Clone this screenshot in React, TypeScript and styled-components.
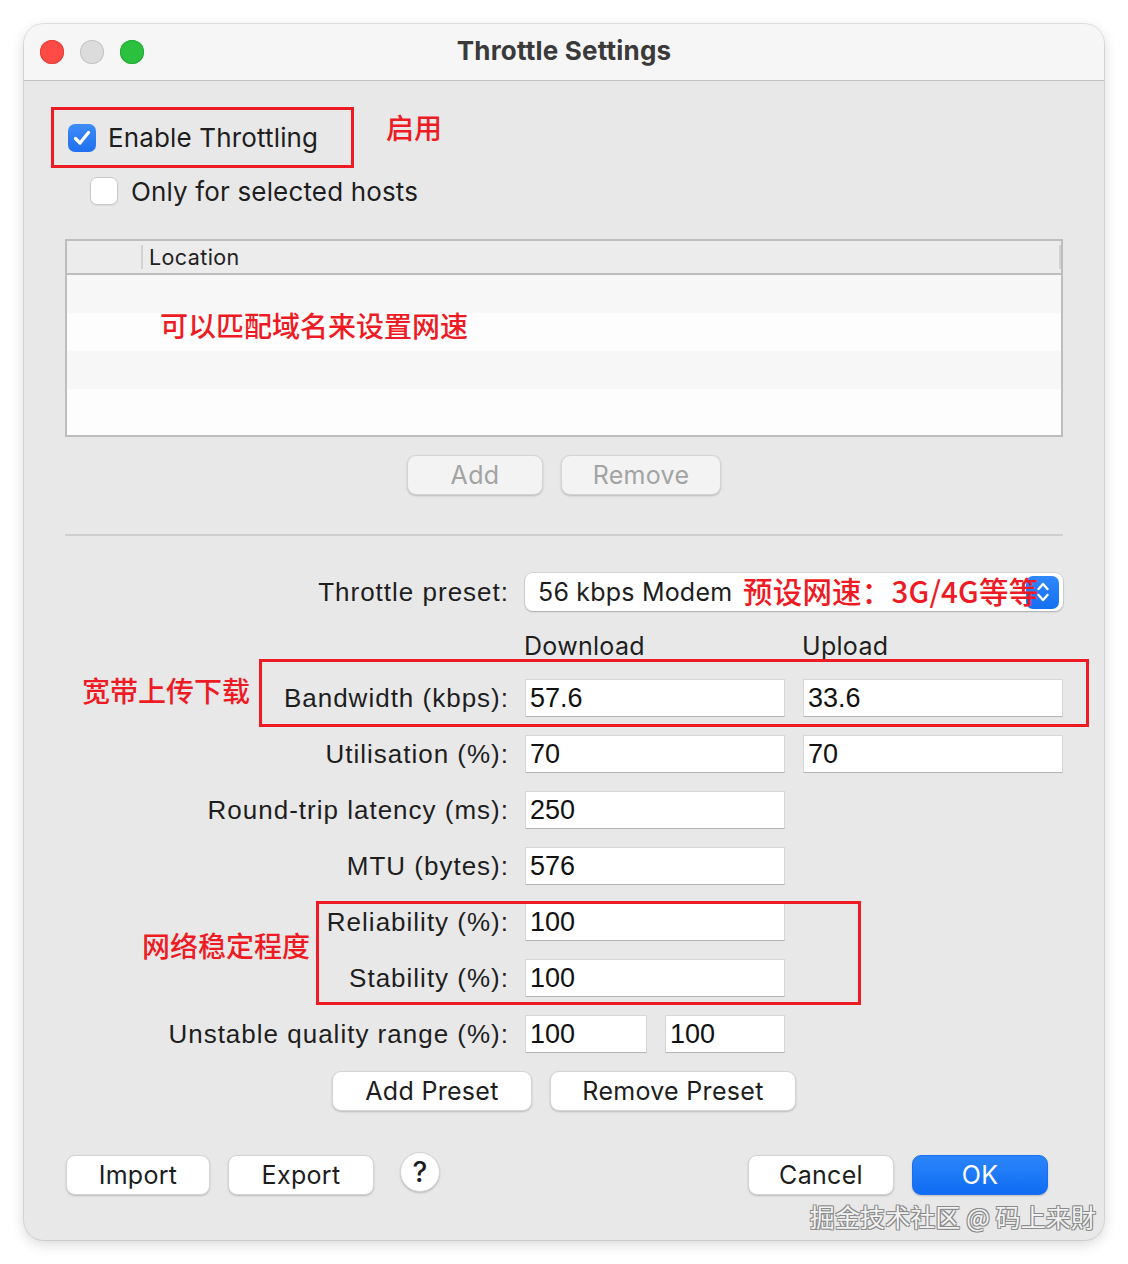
import styled, { createGlobalStyle } from 'styled-components';

const GlobalStyle = createGlobalStyle`
  body {
    margin: 0;
    background: #ffffff;
    font-family: Inter, "Noto Sans", sans-serif;
    color: #1d1d1d;
  }
`;

const RED = '#ee1b24';

const Page = styled.div`
  padding: 24px;
`;

const Window = styled.div`
  position: relative;
  display: flex;
  flex-direction: column;
  width: 1080px;
  height: 1216px;
  background: #e8e8e8;
  border-radius: 20px;
  overflow: hidden;
  box-shadow: 0 0 0 1px rgba(0, 0, 0, 0.1), 0 4px 14px rgba(0, 0, 0, 0.16);
`;

const TitleBar = styled.div`
  display: grid;
  grid-template-columns: 1fr auto 1fr;
  align-items: center;
  height: 56px;
  padding: 0 16px;
  background: #f6f6f6;
  border-bottom: 1px solid #c2c2c2;
`;

const Lights = styled.div`
  display: flex;
  gap: 16px;
`;

const Light = styled.span<{ color: string; edge: string }>`
  width: 24px;
  height: 24px;
  border-radius: 50%;
  background: ${({ color }) => color};
  box-shadow: inset 0 0 0 1px ${({ edge }) => edge};
`;

const Title = styled.div`
  margin-top: -4px;
  font-size: 26px;
  font-weight: 700;
  letter-spacing: 0.2px;
  color: #3a3a3a;
`;

const Body = styled.div`
  display: flex;
  flex-direction: column;
  padding: 0 41px;
`;

const Red = styled.span<{ size?: number }>`
  font-family: "Noto Sans CJK SC", sans-serif;
  font-size: ${({ size }) => size ?? 28}px;
  font-weight: 500;
  line-height: 1;
  color: ${RED};
`;

const EnableRow = styled.div`
  display: flex;
  align-items: flex-start;
  gap: 32px;
  margin: 26px 0 0 -14px;
`;

const RedFrame = styled.div`
  display: flex;
  align-items: center;
  gap: 12px;
  width: 303px;
  height: 61px;
  box-sizing: border-box;
  padding-left: 14px;
  border: 3px solid ${RED};
`;

const EnableNote = styled(Red)`
  margin-top: 6px;
`;

const CheckRow = styled.div`
  display: flex;
  align-items: center;
  gap: 13px;
  margin: 9px 0 0 25px;
  height: 28px;
`;

const Box = styled.span<{ checked?: boolean }>`
  display: flex;
  align-items: center;
  justify-content: center;
  width: 28px;
  height: 28px;
  box-sizing: border-box;
  border-radius: 7px;
  background: ${({ checked }) => (checked ? 'linear-gradient(#3f8cf8, #1f6ff0)' : '#ffffff')};
  border: ${({ checked }) => (checked ? 'none' : '1px solid #c9c9c9')};
  box-shadow: ${({ checked }) => (checked ? 'none' : '0 1px 1px rgba(0,0,0,0.06)')};
`;

const CheckText = styled.span`
  font-size: 26px;
  letter-spacing: 0.15px;
  color: #1e1e1e;
`;

const Table = styled.div`
  position: relative;
  margin-top: 34px;
  height: 198px;
  box-sizing: border-box;
  border: 2px solid #bdbdbd;
  background: #fdfdfd;
  display: flex;
  flex-direction: column;
`;

const TableHead = styled.div`
  display: flex;
  align-items: center;
  height: 32px;
  background: #ececec;
  border-bottom: 2px solid #bcbcbc;
`;

const HeadCell = styled.div<{ width?: number }>`
  flex: ${({ width }) => (width ? `0 0 ${width}px` : '1')};
  height: 24px;
  display: flex;
  align-items: center;
  padding-left: 6px;
  border-right: 2px solid #d2d2d2;
  font-size: 21.5px;
  letter-spacing: 0.4px;
  color: #222;
`;

const TableRow = styled.div<{ odd: boolean }>`
  height: 38px;
  background: ${({ odd }) => (odd ? '#f7f7f7' : '#fdfdfd')};
`;

const TableNote = styled(Red)`
  position: absolute;
  left: 93px;
  top: 70px;
`;

const ButtonRow = styled.div<{ mt: number }>`
  display: flex;
  justify-content: center;
  gap: 18px;
  margin-top: ${({ mt }) => mt}px;
`;

const Button = styled.button<{ w: number; primary?: boolean; disabled?: boolean }>`
  width: ${({ w }) => w}px;
  height: 40px;
  border-radius: 9px;
  border: 1px solid ${({ primary }) => (primary ? '#1a6ff0' : '#d4d4d4')};
  background: ${({ primary, disabled }) =>
    primary ? 'linear-gradient(#2b86fb, #0f6cf3)' : disabled ? '#f3f3f3' : '#ffffff'};
  color: ${({ primary, disabled }) => (primary ? '#ffffff' : disabled ? '#a3a3a3' : '#1d1d1d')};
  box-shadow: 0 1px 2px rgba(0, 0, 0, 0.2);
  font-family: Inter, sans-serif;
  font-size: 25px;
  letter-spacing: 0.3px;
  padding: 0;
`;

const Separator = styled.div`
  margin-top: 39px;
  height: 2px;
  background: #cfcfcf;
`;

const Form = styled.div`
  position: relative;
  display: grid;
  grid-template-columns: 1fr 260px 260px;
  column-gap: 18px;
  row-gap: 18px;
  margin-top: 37px;
`;

const Label = styled.div`
  display: flex;
  align-items: center;
  justify-content: flex-end;
  height: 38px;
  margin-right: -2px;
  font-family: "Liberation Sans", Arial, sans-serif;
  font-size: 26px;
  letter-spacing: 1px;
  color: #1e1e1e;
`;

const Select = styled.div`
  position: relative;
  grid-column: 2 / 4;
  display: flex;
  align-items: center;
  justify-content: space-between;
  height: 38px;
  padding: 0 4px 0 13px;
  background: #ffffff;
  border-radius: 8px;
  box-shadow: 0 0 0 1px rgba(0, 0, 0, 0.08), 0 1px 2px rgba(0, 0, 0, 0.2);
  font-size: 25px;
  letter-spacing: 0.2px;
`;

const Stepper = styled.span`
  display: flex;
  align-items: center;
  justify-content: center;
  width: 33px;
  height: 33px;
  border-radius: 7px;
  background: linear-gradient(#2f88fb, #146ff3);
`;

const SelectNote = styled(Red)`
  position: absolute;
  left: 218px;
  top: 3px;
  z-index: 1;
`;

const ColHead = styled.div<{ first?: boolean }>`
  grid-column: ${({ first }) => (first ? 2 : 3)};
  height: 26px;
  margin: 4px 0 2px -1px;
  font-size: 25px;
  letter-spacing: 0.3px;
  line-height: 26px;
  color: #1e1e1e;
`;

const Field = styled.div`
  display: flex;
  align-items: center;
  height: 38px;
  box-sizing: border-box;
  padding-left: 4px;
  background: #ffffff;
  border: 1px solid #d6d6d6;
  border-bottom-color: #b4b4b4;
  font-family: "Liberation Sans", Arial, sans-serif;
  font-size: 27px;
  color: #111;
`;

const PairField = styled.div`
  display: grid;
  grid-template-columns: 122px 120px;
  gap: 18px;
`;

const Overlay = styled.div<{ x: number; y: number; w: number; h: number }>`
  position: absolute;
  left: ${({ x }) => x}px;
  top: ${({ y }) => y}px;
  width: ${({ w }) => w}px;
  height: ${({ h }) => h}px;
  box-sizing: border-box;
  border: 3px solid ${RED};
  pointer-events: none;
`;

const FormNote = styled(Red)<{ x: number; y: number }>`
  position: absolute;
  left: ${({ x }) => x}px;
  top: ${({ y }) => y}px;
`;

const Footer = styled.div`
  display: flex;
  align-items: center;
  justify-content: space-between;
  margin: 44px 15px 0 1px;
`;

const Group = styled.div`
  display: flex;
  align-items: center;
  gap: 18px;
`;

const Help = styled.button`
  width: 40px;
  height: 40px;
  margin: -6px 0 0 8px;
  border-radius: 50%;
  border: 1px solid #d4d4d4;
  background: #ffffff;
  box-shadow: 0 1px 2px rgba(0, 0, 0, 0.2);
  font-family: Inter, sans-serif;
  font-size: 28px;
  font-weight: 500;
  color: #1d1d1d;
  padding: 0;
`;

const Watermark = styled.div`
  position: absolute;
  right: 8px;
  bottom: 6px;
  font-family: "Noto Sans CJK SC", sans-serif;
  font-size: 25px;
  letter-spacing: 0.1px;
  color: #f2f2f2;
  text-shadow: -1px -1px 0 #8a8a8a, 1px -1px 0 #8a8a8a, -1px 1px 0 #8a8a8a, 1px 1px 0 #8a8a8a;
`;

const rows: { label: string; down: string; up?: string }[] = [
  { label: 'Bandwidth (kbps):', down: '57.6', up: '33.6' },
  { label: 'Utilisation (%):', down: '70', up: '70' },
  { label: 'Round-trip latency (ms):', down: '250' },
  { label: 'MTU (bytes):', down: '576' },
  { label: 'Reliability (%):', down: '100' },
  { label: 'Stability (%):', down: '100' },
];

function Tick() {
  return (
    <svg width="18" height="16" viewBox="0 0 18 16">
      <path d="M2.5 8.5 L7 13 L15.5 2.5" fill="none" stroke="#fff" strokeWidth="3.2" strokeLinecap="round" strokeLinejoin="round" />
    </svg>
  );
}

function UpDown() {
  return (
    <svg width="14" height="24" viewBox="0 0 14 24">
      <path d="M2.5 9 L7 4 L11.5 9 M2.5 15 L7 20 L11.5 15" fill="none" stroke="#fff" strokeWidth="2.4" strokeLinecap="round" strokeLinejoin="round" />
    </svg>
  );
}

export default function App() {
  return (
    <Page>
      <GlobalStyle />
      <Window>
        <TitleBar>
          <Lights>
            <Light color="#fe4b45" edge="#e2403a" />
            <Light color="#dcdcdc" edge="#c4c4c4" />
            <Light color="#2bc03e" edge="#25a935" />
          </Lights>
          <Title>Throttle Settings</Title>
          <span />
        </TitleBar>

        <Body>
          <EnableRow>
            <RedFrame>
              <Box checked><Tick /></Box>
              <CheckText>Enable Throttling</CheckText>
            </RedFrame>
            <EnableNote>启用</EnableNote>
          </EnableRow>
          <CheckRow>
            <Box />
            <CheckText>Only for selected hosts</CheckText>
          </CheckRow>

          <Table>
            <TableHead>
              <HeadCell width={68} />
              <HeadCell>Location</HeadCell>
            </TableHead>
            {[0, 1, 2, 3].map(i => (
              <TableRow key={i} odd={i % 2 === 0} />
            ))}
            <TableNote>可以匹配域名来设置网速</TableNote>
          </Table>

          <ButtonRow mt={18}>
            <Button w={136} disabled>Add</Button>
            <Button w={160} disabled>Remove</Button>
          </ButtonRow>

          <Separator />

          <Form>
            <Label>Throttle preset:</Label>
            <Select>
              <span>56 kbps Modem</span>
              <Stepper><UpDown /></Stepper>
              <SelectNote size={29.5}>预设网速：3G/4G等等</SelectNote>
            </Select>

            <ColHead first>Download</ColHead>
            <ColHead>Upload</ColHead>

            {rows.map(row => [
              <Label key={`${row.label}-l`}>{row.label}</Label>,
              <Field key={`${row.label}-d`}>{row.down}</Field>,
              row.up ? <Field key={`${row.label}-u`}>{row.up}</Field> : <span key={`${row.label}-u`} />,
            ])}

            <Label>Unstable quality range (%):</Label>
            <PairField>
              <Field>100</Field>
              <Field>100</Field>
            </PairField>
            <span />

            <Overlay x={194} y={86} w={830} h={68} />
            <Overlay x={251} y={328} w={545} h={104} />
            <FormNote x={17} y={103}>宽带上传下载</FormNote>
            <FormNote x={77} y={358}>网络稳定程度</FormNote>
          </Form>

          <ButtonRow mt={18}>
            <Button w={200}>Add Preset</Button>
            <Button w={246}>Remove Preset</Button>
          </ButtonRow>

          <Footer>
            <Group>
              <Button w={144}>Import</Button>
              <Button w={146}>Export</Button>
              <Help>?</Help>
            </Group>
            <Group>
              <Button w={146}>Cancel</Button>
              <Button w={136} primary>OK</Button>
            </Group>
          </Footer>
        </Body>

        <Watermark>掘金技术社区 @ 码上来財</Watermark>
      </Window>
    </Page>
  );
}
